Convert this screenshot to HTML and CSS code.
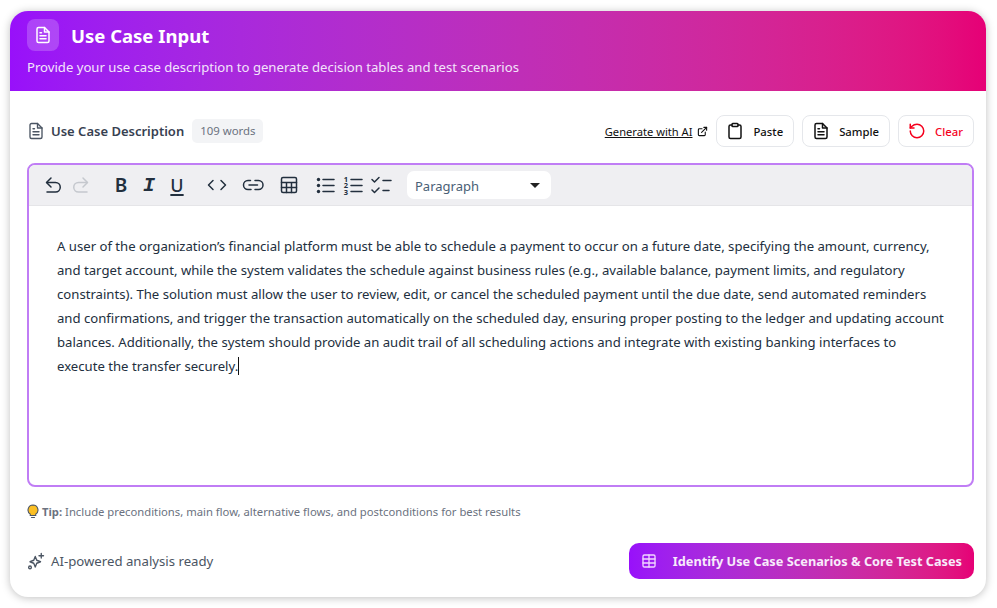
FILE: index.html
```html
<!DOCTYPE html>
<html lang="en">
<head>
    <meta charset="UTF-8">
    <meta name="viewport" content="width=device-width, initial-scale=1.0">
    <title>Use Case Input</title>
    <link rel="stylesheet" href="styles.css">
</head>
<body>

<div class="card">
    <div class="card-header">
        <div class="header-title">
            <span class="header-icon">
                <svg width="18" height="18" viewBox="0 0 24 24" fill="none" stroke="#fff" stroke-width="2" stroke-linecap="round" stroke-linejoin="round"><path d="M14 2H6a2 2 0 0 0-2 2v16a2 2 0 0 0 2 2h12a2 2 0 0 0 2-2V8z"/><path d="M14 2v6h6"/><path d="M8 13h8M8 17h8M8 9h2"/></svg>
            </span>
            <h2>Use Case Input</h2>
        </div>
        <p>Provide your use case description to generate decision tables and test scenarios</p>
    </div>

    <div class="card-body">
        <div class="input-bar">
            <div class="input-label">
                <svg width="18" height="18" viewBox="0 0 24 24" fill="none" stroke="#4b5563" stroke-width="1.800" stroke-linecap="round" stroke-linejoin="round"><path d="M14 2H6a2 2 0 0 0-2 2v16a2 2 0 0 0 2 2h12a2 2 0 0 0 2-2V8z"/><path d="M14 2v6h6"/><path d="M8 13h8M8 17h8M8 9h2"/></svg>
                <strong>Use Case Description</strong>
                <span class="word-count">109 words</span>
            </div>
            <div class="input-actions">
                <a class="ai-link" href="#"><span>Generate with AI</span>
                    <svg width="11" height="11" viewBox="0 0 24 24" fill="none" stroke="#111" stroke-width="2.400" stroke-linecap="round" stroke-linejoin="round"><path d="M18 13v6a2 2 0 0 1-2 2H5a2 2 0 0 1-2-2V8a2 2 0 0 1 2-2h6"/><path d="M15 3h6v6"/><path d="M10 14 21 3"/></svg>
                </a>
                <button class="action-btn">
                    <svg width="18" height="18" viewBox="0 0 24 24" fill="none" stroke="#111" stroke-width="2" stroke-linecap="round" stroke-linejoin="round"><rect x="8" y="2" width="8" height="4" rx="1"/><path d="M16 4h2a2 2 0 0 1 2 2v14a2 2 0 0 1-2 2H6a2 2 0 0 1-2-2V6a2 2 0 0 1 2-2h2"/></svg>
                    Paste
                </button>
                <button class="action-btn">
                    <svg width="18" height="18" viewBox="0 0 24 24" fill="none" stroke="#111" stroke-width="2" stroke-linecap="round" stroke-linejoin="round"><path d="M14 2H6a2 2 0 0 0-2 2v16a2 2 0 0 0 2 2h12a2 2 0 0 0 2-2V8z"/><path d="M14 2v6h6"/><path d="M8 13h8M8 17h8M8 9h2"/></svg>
                    Sample
                </button>
                <button class="action-btn clear-btn">
                    <svg width="18" height="18" viewBox="0 0 24 24" fill="none" stroke="#f5001d" stroke-width="2" stroke-linecap="round" stroke-linejoin="round"><path d="M3 12a9 9 0 1 0 9-9 9.750 9.750 0 0 0-6.740 2.740L3 8"/><path d="M3 3v5h5"/></svg>
                    Clear
                </button>
            </div>
        </div>

        <div class="editor">
            <div class="toolbar">
                <div class="tool-group">
                    <span class="tool"><svg viewBox="0 0 24 24"><path d="M10 5 5.500 9.500 10 14"/><path d="M6 9.500h8.500a4.750 4.750 0 0 1 0 9.500H6"/></svg></span>
                    <span class="tool tool-off"><svg viewBox="0 0 24 24"><path d="M14 5l4.500 4.500L14 14"/><path d="M18 9.500H9.500a4.750 4.750 0 0 0 0 9.500H18"/></svg></span>
                </div>
                <div class="tool-group">
                    <span class="tool tool-b">B</span>
                    <span class="tool tool-i">I</span>
                    <span class="tool tool-u">U</span>
                </div>
                <div class="tool-group wide">
                    <span class="tool"><svg viewBox="0 0 24 24"><path d="M8 7.500 3.500 12 8 16.500"/><path d="M16 7.500l4.500 4.500-4.500 4.500"/></svg></span>
                    <span class="tool"><svg viewBox="0 0 24 24"><path d="M9.500 7.500H7a4.500 4.500 0 0 0 0 9h3"/><path d="M14 7.500h3.500a4.500 4.500 0 0 1 0 9H14"/><path d="M8 12h8.500"/></svg></span>
                    <span class="tool"><svg viewBox="0 0 24 24"><rect x="4.500" y="4.500" width="15" height="15" rx="1.500"/><path d="M4.500 9.500h15M4.500 14.500h15M9.500 9.500v10M14.500 9.500v10"/></svg></span>
                    <div class="tool-group">
                        <span class="tool"><svg viewBox="0 0 24 24"><path d="M10 6.500h11M10 12.500h11M10 18.500h11"/><circle class="dot" cx="5.500" cy="6.500" r="1.700"/><circle class="dot" cx="5.500" cy="12.500" r="1.700"/><circle class="dot" cx="5.500" cy="18.500" r="1.700"/></svg></span>
                        <span class="tool"><svg viewBox="0 0 24 24"><path d="M10 6.500h11M10 12.500h11M10 18.500h11"/><text x="5" y="0.500" class="num">123</text></svg></span>
                        <span class="tool"><svg viewBox="0 0 24 24"><path d="M3 6.500l2.500 2.500L10 4.500M3 17l2.500 2.500L10 15"/><path d="M14 7.500h8M14 17.500h6"/></svg></span>
                    </div>
                </div>
                <div class="block-select">
                    <span>Paragraph</span>
                    <i class="caret"></i>
                </div>
            </div>
            <div class="editor-text">
                <p>A user of the organization’s financial platform must be able to schedule a payment to occur on a future date, specifying the amount, currency, and target account, while the system validates the schedule against business rules (e.g., available balance, payment limits, and regulatory constraints). The solution must allow the user to review, edit, or cancel the scheduled payment until the due date, send automated reminders and confirmations, and trigger the transaction automatically on the scheduled day, ensuring proper posting to the ledger and updating account balances. Additionally, the system should provide an audit trail of all scheduling actions and integrate with existing banking interfaces to execute the transfer securely.<span class="cursor"></span></p>
            </div>
        </div>

        <p class="tip">
            <svg width="12" height="15" viewBox="0 0 24 30"><path d="M12 2a10 10 0 0 0-5.500 18.300V23h11v-2.700A10 10 0 0 0 12 2z" fill="#fbbf24" stroke="#4b5563" stroke-width="2.200"/><path d="M9 27h6" stroke="#4b5563" stroke-width="2.400" stroke-linecap="round"/></svg>
            <span><strong>Tip:</strong> Include preconditions, main flow, alternative flows, and postconditions for best results</span>
        </p>

        <div class="card-footer">
            <div class="ai-status">
                <svg width="18" height="18" viewBox="0 0 24 24" fill="none" stroke="#4b5563" stroke-width="1.800" stroke-linecap="round" stroke-linejoin="round"><path d="M11 6l2 5 5 2-5 2-2 5-2-5-5-2 5-2z"/><path d="M19 2v6M16 5h6"/><circle cx="4" cy="20.500" r="1.800"/></svg>
                AI-powered analysis ready
            </div>
            <button class="identify-btn">
                <svg width="16" height="16" viewBox="0 0 24 24" fill="none" stroke="#f1d5ff" stroke-width="2" stroke-linecap="round" stroke-linejoin="round"><rect x="3" y="3" width="18" height="18" rx="2"/><path d="M3 9h18M3 15h18M12 3v18"/></svg>
                Identify Use Case Scenarios &amp; Core Test Cases
            </button>
        </div>
    </div>
</div>

</body>
</html>
```

FILE: styles.css
```css
* {
    box-sizing: border-box;
}

html, body {
    height: 100%;
}

body {
    margin: 0;
    padding: 11px 11px 11px 10px;
    background: #fff;
    color: #111;
    font-family: "Noto Sans", "Open Sans", sans-serif;
}

.card {
    height: 586px;
    background: #fff;
    border-radius: 18px;
    overflow: hidden;
    box-shadow: 0 1px 8px rgba(0, 0, 0, 0.25);
}

.card-header {
    height: 80px;
    padding: 8px 17px 0;
    background: linear-gradient(to right in oklab, #9810fa, #e60076);
    color: #fff;
}

.header-title {
    display: flex;
    align-items: center;
    gap: 12px;
}

.header-icon {
    display: flex;
    align-items: center;
    justify-content: center;
    width: 32px;
    height: 32px;
    border-radius: 8px;
    background: rgba(255, 255, 255, 0.2);
}

h2 {
    margin: 0;
    font-size: 18.500px;
    font-weight: 700;
}

.card-header p {
    margin: 7px 0 0;
    font-size: 13.130px;
    color: #f3e4fb;
}

.card-body {
    padding: 24px 12px 0 17px;
}

.input-bar {
    display: flex;
    align-items: center;
    justify-content: space-between;
    height: 32px;
}

.input-label {
    display: flex;
    align-items: center;
    gap: 6px;
    font-size: 13px;
    color: #374151;
}

.input-label strong {
    font-weight: 600;
    margin-right: 2px;
}

.word-count {
    padding: 0 8px;
    height: 24px;
    line-height: 24px;
    border-radius: 5px;
    background: #f3f4f6;
    color: #6b7280;
    font-size: 11.400px;
}

.input-actions {
    display: flex;
    align-items: center;
    gap: 8px;
}

.ai-link {
    display: flex;
    align-items: center;
    gap: 5px;
    color: #111;
    font-size: 11.150px;
}

.action-btn {
    display: flex;
    align-items: center;
    gap: 9px;
    height: 32px;
    padding: 0 10px 0 9px;
    border: 1px solid #e5e7eb;
    border-radius: 8px;
    background: #fff;
    color: #111;
    font-family: inherit;
    font-size: 11.300px;
    font-weight: 500;
}

.clear-btn {
    color: #f5001d;
}

.editor {
    margin-top: 16px;
    height: 324px;
    border: 2px solid #c07df5;
    border-radius: 8px;
    overflow: hidden;
}

.toolbar {
    display: flex;
    align-items: center;
    gap: 12px;
    height: 41px;
    padding: 0 10px;
    background: #efeff2;
    border-bottom: 1px solid #e5e5e8;
}

.tool-group {
    display: flex;
    align-items: center;
}

.tool-group.wide {
    gap: 8px;
}

.tool {
    display: flex;
    align-items: center;
    justify-content: center;
    width: 28px;
    height: 24px;
    color: #222f3e;
}

.tool svg {
    width: 24px;
    height: 24px;
    fill: none;
    stroke: #222f3e;
    stroke-width: 1.500;
    stroke-linecap: round;
    stroke-linejoin: round;
    overflow: visible;
}

.tool-off svg {
    stroke: #c5c8ce;
}

.tool-b {
    font-size: 19px;
    font-weight: 600;
}

.tool-i {
    font-family: "Liberation Mono", monospace;
    font-size: 20px;
    font-weight: 700;
    font-style: italic;
}

.tool-u {
    font-size: 18px;
    font-weight: 500;
    text-decoration: underline;
    text-decoration-thickness: 2px;
    text-underline-offset: 2px;
}

.tool .dot {
    fill: #222f3e;
    stroke: none;
}

.tool .num {
    fill: #222f3e;
    stroke: none;
    font-size: 7.500px;
    font-weight: 700;
    writing-mode: vertical-rl;
    text-orientation: upright;
    letter-spacing: -3.500px;
}

.block-select {
    display: flex;
    align-items: center;
    justify-content: space-between;
    width: 144px;
    height: 28px;
    padding: 1px 11px 0 8px;
    border-radius: 7px;
    background: #fff;
    color: #4a6076;
    font-size: 13px;
}

.caret {
    border-top: 5px solid #222;
    border-left: 5px solid transparent;
    border-right: 5px solid transparent;
}

.editor-text {
    padding: 28px 27px 0 28px;
    font-size: 13.150px;
    line-height: 24px;
    color: #222f3e;
}

.editor-text p {
    margin: 0;
}

.cursor {
    display: inline-block;
    width: 1px;
    height: 18px;
    background: #111;
    vertical-align: text-bottom;
}

.tip {
    display: flex;
    align-items: center;
    gap: 3px;
    margin: 17px 0 0;
    font-size: 11.280px;
    color: #6b7280;
}

.tip strong {
    font-weight: 700;
}

.card-footer {
    display: flex;
    align-items: center;
    justify-content: space-between;
    margin-top: 24px;
}

.ai-status {
    display: flex;
    align-items: center;
    gap: 6px;
    font-size: 13.200px;
    color: #4b5563;
}

.identify-btn {
    display: flex;
    align-items: center;
    gap: 16px;
    height: 36px;
    padding: 0 12px;
    border: none;
    border-radius: 10px;
    background: linear-gradient(to right in oklab, #9810fa, #e60076);
    color: #f8ebfb;
    font-family: inherit;
    font-size: 12.750px;
    font-weight: 700;
}
```
